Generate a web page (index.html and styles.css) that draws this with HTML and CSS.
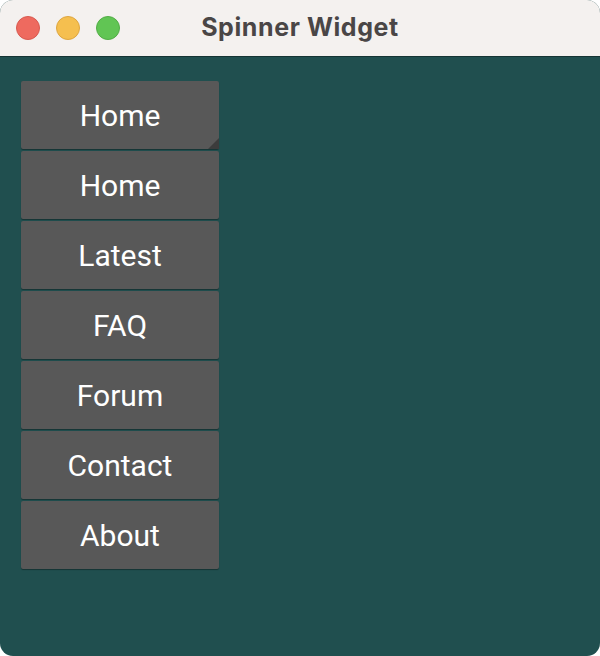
FILE: index.html
```html
<!DOCTYPE html>
<html>
<head>
<meta charset="utf-8">
<link rel="stylesheet" href="styles.css">
</head>
<body>
<div class="window">
  <div class="titlebar">
    <div class="lights">
      <span class="light red"></span>
      <span class="light yellow"></span>
      <span class="light green"></span>
    </div>
    <div class="title">Spinner Widget</div>
  </div>
  <div class="content">
    <div class="spinner">
      <div class="item current">Home<span class="corner"></span></div>
      <div class="item">Home</div>
      <div class="item">Latest</div>
      <div class="item">FAQ</div>
      <div class="item">Forum</div>
      <div class="item">Contact</div>
      <div class="item">About</div>
    </div>
  </div>
</div>
</body>
</html>
```

FILE: styles.css
```css
html, body {
  margin: 0;
  padding: 0;
  background: #ffffff;
}
.window {
  width: 600px;
  height: 656px;
  border-radius: 13px;
  overflow: hidden;
  display: flex;
  flex-direction: column;
  background: #204f4f;
}
.titlebar {
  height: 56px;
  flex: none;
  background: #f4f1ef;
  border-bottom: 1px solid #163434;
  position: relative;
  display: flex;
  align-items: center;
  justify-content: center;
}
.lights {
  position: absolute;
  left: 16px;
  top: 16px;
  display: flex;
  gap: 16px;
}
.light {
  width: 24px;
  height: 24px;
  border-radius: 50%;
  box-sizing: border-box;
}
.red { background: #ee6a5f; border: 1px solid #d85a50; }
.yellow { background: #f5bf4f; border: 1px solid #dea640; }
.green { background: #61c554; border: 1px solid #52ad46; }
.title {
  font-family: Inter, "Open Sans", sans-serif;
  font-weight: 700;
  font-size: 25px;
  color: #4a4646;
  letter-spacing: 0.6px;
  margin-top: -3px;
}
.content {
  flex: 1;
  padding: 24px 21px;
}
.spinner {
  width: 198px;
  display: flex;
  flex-direction: column;
  gap: 2px;
}
.item {
  position: relative;
  height: 68px;
  background: #585858;
  border-radius: 2px;
  box-shadow: 0 1px 1px rgba(0,0,0,0.35);
  color: #ffffff;
  font-family: Roboto, sans-serif;
  font-size: 30px;
  display: flex;
  align-items: center;
  justify-content: center;
}
.corner {
  position: absolute;
  right: 0;
  bottom: 0;
  width: 0;
  height: 0;
  border-style: solid;
  border-width: 0 0 11px 11px;
  border-color: transparent transparent #3c3c3c transparent;
}
```
